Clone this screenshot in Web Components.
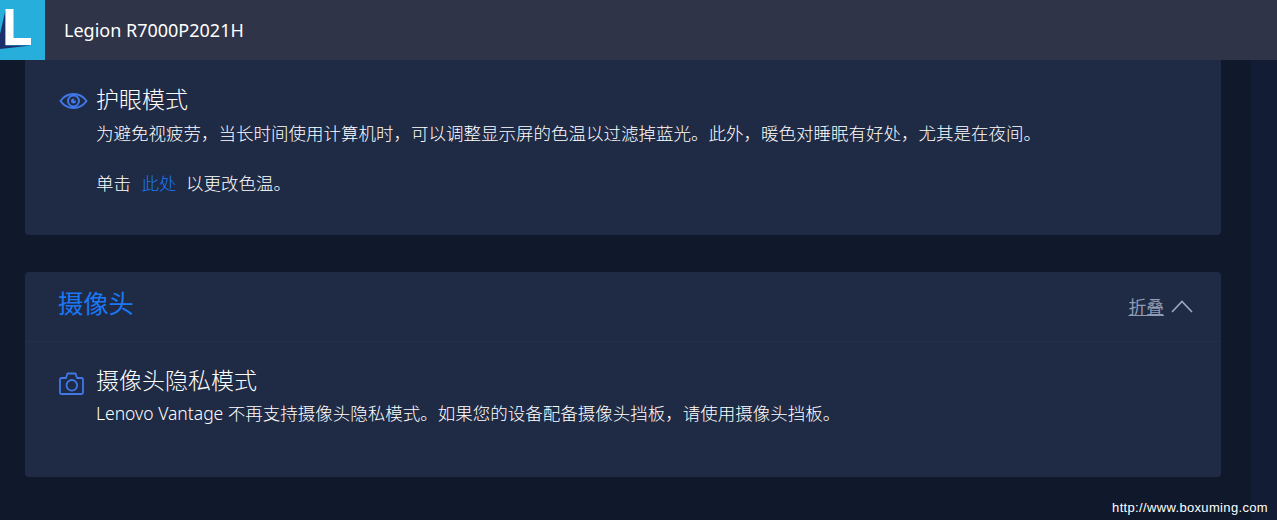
<!DOCTYPE html>
<html>
  <head>
    <meta charset="utf-8">
    <style>
      html, body { margin: 0; height: 100%; background: #10192b; overflow: hidden; }
      body { font-family: "Noto Sans", "Noto Sans CJK SC", sans-serif; color: #fff; }
      vantage-feature a { color: #1a78f5; margin: 0 5px 0 6px; }
      vantage-feature p { margin: 0; }
      vantage-feature p + p { margin-top: 24px; }
    </style>
  </head>
  <body>

    <vantage-app>
      <vantage-header slot="header" title-text="Legion R7000P2021H"></vantage-header>

      <vantage-section>
        <vantage-feature heading="护眼模式">
          <svg slot="icon" width="30" height="20" viewBox="0 0 30 20" fill="none" stroke="#4178e8" stroke-width="2">
            <path d="M1.500 10C5 5 9.500 3 14.500 3s9.500 2 13 7c-3.500 5-8 7-13 7s-9.500-2-13-7z"/>
            <circle cx="14.500" cy="10" r="5.500"/>
            <circle cx="14.500" cy="10" r="2.500" fill="#4178e8" stroke="none"/>
            <circle cx="15.800" cy="8.800" r="1" fill="#1f2a44" stroke="none"/>
          </svg>
          <p>为避免视疲劳，当长时间使用计算机时，可以调整显示屏的色温以过滤掉蓝光。此外，暖色对睡眠有好处，尤其是在夜间。</p>
          <p>单击 <a>此处</a> 以更改色温。</p>
        </vantage-feature>
      </vantage-section>

      <vantage-section heading="摄像头" collapsible>
        <vantage-feature heading="摄像头隐私模式">
          <svg slot="icon" width="26" height="24" viewBox="0 0 26 24" fill="none" stroke="#4178e8" stroke-width="1.800" stroke-linejoin="round">
            <path d="M2.500 6H7L8.500 1.500h8L18 6h4.500a1.500 1.500 0 0 1 1.500 1.500v13a1.500 1.500 0 0 1-1.500 1.500h-20A1.500 1.500 0 0 1 1 20.500v-13A1.500 1.500 0 0 1 2.500 6z"/>
            <circle cx="12.800" cy="13.300" r="5.300"/>
          </svg>
          <p>Lenovo Vantage 不再支持摄像头隐私模式。如果您的设备配备摄像头挡板，请使用摄像头挡板。</p>
        </vantage-feature>
      </vantage-section>
    </vantage-app>

    <script>
      class VantageApp extends HTMLElement {
        constructor () {
          super();
          this.attachShadow({mode: 'open'});
          this.shadowRoot.innerHTML = `
            <style>
              :host { display: flex; flex-flow: column nowrap; height: 520px; position: relative; }
              .body { flex: 1; display: flex; flex-flow: row nowrap; min-height: 0; }
              main {
                flex: 1;
                display: flex; flex-flow: column nowrap; gap: 37px;
                padding: 0 30px 0 25px;
              }
              .track { flex: 0 0 26px; background: #121c34; }
              .watermark {
                position: absolute; right: 9px; bottom: 5px;
                font: 13px "Liberation Sans", Arial, sans-serif;
                letter-spacing: .34px;
                color: #fff;
              }
            </style>
            <slot name="header"></slot>
            <div class="body">
              <main><slot></slot></main>
              <div class="track"></div>
            </div>
            <div class="watermark">http://www.boxuming.com</div>
          `;
        }
      }
      customElements.define('vantage-app', VantageApp);

      class VantageHeader extends HTMLElement {
        constructor () {
          super();
          this.attachShadow({mode: 'open'});
          this.shadowRoot.innerHTML = `
            <style>
              :host { display: flex; flex-flow: row nowrap; align-items: center; height: 60px; background: #303449; }
              .logo { flex: 0 0 45px; height: 60px; background: #27aedb; }
              .logo svg { display: block; }
              .name { margin-left: 19px; font-size: 18px; color: #fff; }
            </style>
            <div class="logo">
              <svg width="45" height="60" viewBox="0 0 45 60">
                <path d="M5.500 10 0 34v15l31-3.500H5.500z" fill="#1d2f6b"/>
                <path d="M5.500 9H13.500V38H31V45H5.500z" fill="#fff"/>
              </svg>
            </div>
            <div class="name"></div>
          `;
        }
        connectedCallback () {
          this.shadowRoot.querySelector('.name').textContent = this.getAttribute('title-text');
        }
      }
      customElements.define('vantage-header', VantageHeader);

      class VantageSection extends HTMLElement {
        constructor () {
          super();
          this.attachShadow({mode: 'open'});
          this.shadowRoot.innerHTML = `
            <style>
              :host { display: block; height: 175px; background: #1f2a44; border-radius: 0 0 4px 4px; --feature-top: 23px; --text-gap: 5px; }
              :host([collapsible]) { height: 205px; border-radius: 4px; --feature-top: 22px; --text-gap: 4px; }
              header {
                display: none; flex-flow: row nowrap; align-items: center; justify-content: space-between;
                height: 70px; padding: 0 28px 0 33px;
                border-bottom: 1px solid #232e49;
                box-sizing: border-box;
              }
              :host([collapsible]) header { display: flex; }
              h2 { margin: 0 0 10px; font-weight: 400; font-size: 25.300px; color: #1a78f5; }
              .toggle { display: flex; flex-flow: row nowrap; align-items: center; gap: 7px; margin-bottom: 2px; color: #8f9ab3; font-size: 17.800px; }
              .toggle span { text-decoration: underline; }
            </style>
            <header>
              <h2></h2>
              <div class="toggle">
                <span>折叠</span>
                <svg width="22" height="14" viewBox="0 0 22 14" fill="none" stroke="#a0a8bb" stroke-width="1.600"><path d="M1 13 11 2.500 21 13"/></svg>
              </div>
            </header>
            <slot></slot>
          `;
        }
        connectedCallback () {
          this.shadowRoot.querySelector('h2').textContent = this.getAttribute('heading');
        }
      }
      customElements.define('vantage-section', VantageSection);

      class VantageFeature extends HTMLElement {
        constructor () {
          super();
          this.attachShadow({mode: 'open'});
          this.shadowRoot.innerHTML = `
            <style>
              :host { display: flex; flex-flow: row nowrap; padding: var(--feature-top) 33px 0 34px; }
              .icon { flex: 0 0 37px; padding-top: 8px; }
              ::slotted(svg) { display: block; }
              .text { flex: 1; font-size: 17.500px; font-weight: 300; line-height: 26px; }
              h3 { margin: 0 0 var(--text-gap); font-weight: 300; font-size: 23px; line-height: 32px; }
            </style>
            <div class="icon"><slot name="icon"></slot></div>
            <div class="text">
              <h3></h3>
              <slot></slot>
            </div>
          `;
        }
        connectedCallback () {
          this.shadowRoot.querySelector('h3').textContent = this.getAttribute('heading');
        }
      }
      customElements.define('vantage-feature', VantageFeature);
    </script>

  </body>
</html>
